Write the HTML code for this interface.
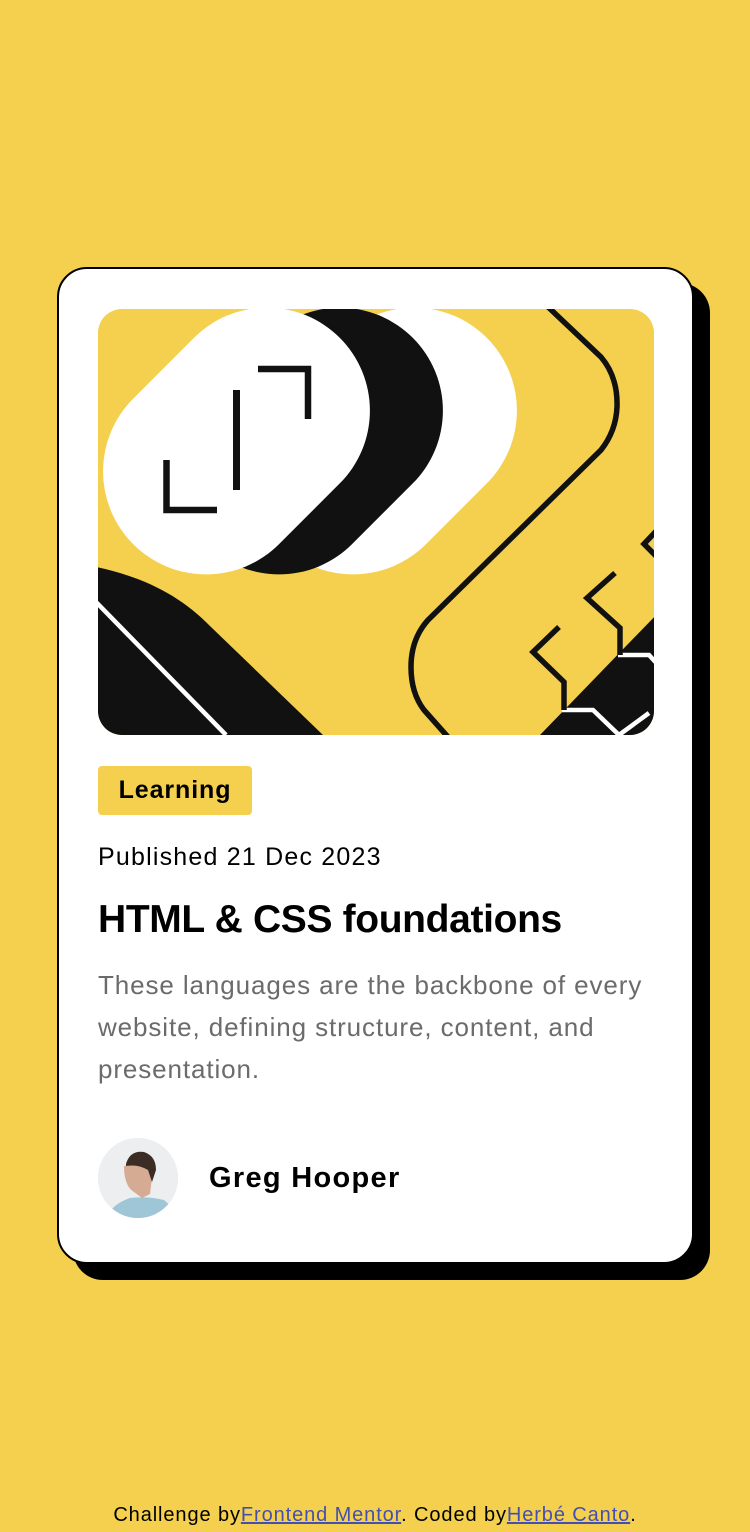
<!DOCTYPE html>
<html><head><meta charset="utf-8"><style>
*{margin:0;padding:0;box-sizing:border-box}
body{width:750px;height:1532px;background:#f4d04e;font-family:"Liberation Sans",sans-serif;position:relative;overflow:hidden}
.shadow{position:absolute;left:73px;top:283px;width:637px;height:997px;background:#000;border-radius:30px}
.card{position:absolute;left:57px;top:267px;width:637px;height:997px;background:#fff;border:2px solid #000;border-radius:30px}
.img{position:absolute;left:98px;top:309px}
.tag{position:absolute;left:98px;top:766px;width:154px;height:49px;background:#f4d04e;border-radius:4px;font-weight:bold;font-size:25px;line-height:49px;text-align:center;letter-spacing:0.9px}
.pub{position:absolute;left:98px;top:840px;font-size:25px;line-height:34px;letter-spacing:1.2px}
h1{position:absolute;left:98px;top:896px;font-size:39px;line-height:48px;font-weight:bold;letter-spacing:-0.35px}
.desc{position:absolute;left:98px;top:964px;width:580px;font-size:26px;line-height:42px;color:#6b6b6b;letter-spacing:0.9px}
.av{position:absolute;left:98px;top:1138px;width:80px;height:80px;border-radius:50%;overflow:hidden;background:#e8ecef}
.name{position:absolute;left:209px;top:1160px;font-size:29px;font-weight:bold;line-height:36px;letter-spacing:1.3px}
.foot{position:absolute;left:0;width:750px;top:1502px;text-align:center;font-size:20px;line-height:26px;letter-spacing:0.9px}
.foot a{color:#4450b0;text-decoration:underline}
</style></head><body>
<div class="shadow"></div>
<div class="card"></div>
<svg class="img" width="556" height="426" viewBox="0 0 556 426">
<defs><clipPath id="c"><rect width="556" height="426" rx="24"/></clipPath></defs>
<g clip-path="url(#c)">
<rect width="556" height="426" fill="#f4d04e"/>
<rect x="-7.5" y="29" width="292" height="206" rx="103" fill="#fff" transform="translate(147 0) rotate(-45 138.5 132)"/>
<rect x="-7.5" y="29" width="292" height="206" rx="103" fill="#111" transform="translate(73 0) rotate(-45 138.5 132)"/>
<rect x="-7.5" y="29" width="292" height="206" rx="103" fill="#fff" transform="rotate(-45 138.5 132)"/>
<rect x="135" y="81" width="7" height="100" fill="#111"/>
<path d="M160 60H210V110" fill="none" stroke="#111" stroke-width="6.5"/>
<path d="M68.5 151V201H119" fill="none" stroke="#111" stroke-width="6.5"/>
<path d="M-2 258 C45 268 82 286 113 318 L225 426 L-2 426Z" fill="#111"/>
<path d="M-2 293 L128 426" stroke="#fff" stroke-width="4.5"/>
<path d="M448 -4 L503 48 Q520 68 519 98 Q518 122 503 141 L330 311 Q313 330 313 358 Q313 384 326 401 L350 428" fill="none" stroke="#111" stroke-width="5.5"/>
<path d="M442 426 L562 302 L562 426Z" fill="#111"/>
<path d="M464 401H495L521 426L551 404M520 346H551L562 358" fill="none" stroke="#fff" stroke-width="4.5"/>
<path d="M461 318L435 343L466 373V401M517 264L489 289L522 319V346M562 218L546 235L562 251" fill="none" stroke="#111" stroke-width="5.5"/>
</g>
</svg>
<div class="tag">Learning</div>
<div class="pub">Published 21 Dec 2023</div>
<h1>HTML &amp; CSS foundations</h1>
<div class="desc">These languages are the backbone of every website, defining structure, content, and presentation.</div>
<div class="av"><svg width="80" height="80"><rect width="80" height="80" fill="#eceeef"/><path d="M8 80 Q14 66 32 60 Q50 58 66 62 Q76 70 78 80Z" fill="#9fc6d6"/><path d="M26 28 Q26 48 36 54 L44 60 L52 56 L54 40 L50 26Z" fill="#d6ab93"/><path d="M28 26 Q32 12 46 14 Q58 18 58 32 L54 44 L50 32 Q40 26 28 28Z" fill="#3b2d26"/></svg></div>
<div class="name">Greg Hooper</div>
<div class="foot">Challenge by<a>Frontend Mentor</a>. Coded by<a>Herbé Canto</a>.</div>
</body></html>
